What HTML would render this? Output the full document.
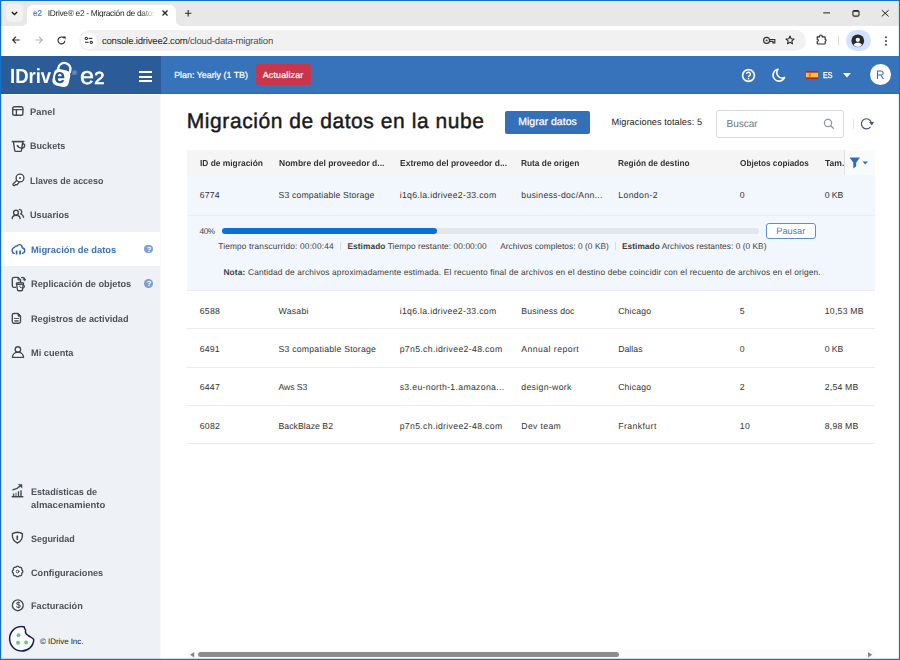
<!DOCTYPE html>
<html lang="es">
<head>
<meta charset="utf-8">
<title>IDrive® e2 - Migración de datos en la nube</title>
<style>
*{box-sizing:border-box;margin:0;padding:0}
html,body{width:900px;height:660px;overflow:hidden;background:#fff}
body{font-family:"Liberation Sans",sans-serif;color:#222;position:relative;text-rendering:geometricPrecision}
.a{position:absolute}
.t{position:absolute;white-space:nowrap;line-height:1}
svg{position:absolute;overflow:visible}
.hr{position:absolute;left:187px;width:688px;height:1px;background:#ececee}
</style>
</head>
<body>
<!-- ===== Browser chrome ===== -->
<div class="a" style="left:0;top:0;width:900px;height:26px;background:#e8e8e8"></div>
<div class="a" style="left:5.5px;top:4px;width:17.5px;height:18px;border-radius:5px;background:#f2f2f2"></div>
<svg style="left:10.5px;top:10.5px" width="7" height="5" viewBox="0 0 7 5"><path d="M.8 .9 L3.5 3.6 L6.2 .9" fill="none" stroke="#1f1f1f" stroke-width="1.4"/></svg>
<div class="a" style="left:27px;top:4.5px;width:149px;height:22px;background:#fff;border-radius:6px 6px 0 0"></div>
<svg style="left:22px;top:21px" width="5" height="5" viewBox="0 0 5 5"><path d="M5 0 V5 H0 A5 5 0 0 0 5 0 Z" fill="#fff"/></svg>
<svg style="left:176px;top:21px" width="5" height="5" viewBox="0 0 5 5"><path d="M0 0 V5 H5 A5 5 0 0 1 0 0 Z" fill="#fff"/></svg>
<div class="t" style="left:32.80px;top:9.00px;font-size:8.6px;color:#3d7ccb;-webkit-text-stroke:0.2px #3d7ccb;transform:scaleX(0.9407);transform-origin:0 50%">e2</div>
<div class="t" style="left:47.70px;top:9.00px;font-size:8.4px;color:#1f1f1f;letter-spacing:-0.313px;width:108px;overflow:hidden;-webkit-mask-image:linear-gradient(90deg,#000 86%,transparent 99%);mask-image:linear-gradient(90deg,#000 86%,transparent 99%)">IDrive® e2 - Migración de datos en la nube</div>
<svg style="left:162.2px;top:9.9px" width="6" height="6" viewBox="0 0 6 6"><path d="M.5 .5 L5.5 5.5 M5.5 .5 L.5 5.5" stroke="#1f1f1f" stroke-width="1.15"/></svg>
<svg style="left:184.9px;top:9.7px" width="6.4" height="6.4" viewBox="0 0 6.4 6.4"><path d="M3.2 0 V6.4 M0 3.2 H6.4" stroke="#2a2a2a" stroke-width="1.1"/></svg>
<svg style="left:821.6px;top:7.7px" width="70" height="10" viewBox="0 0 70 10"><path d="M1.2 4.9 H8" stroke="#1f1f1f" stroke-width="1"/><rect x="30.9" y="2.5" width="6.1" height="5.6" rx="1.4" fill="none" stroke="#222" stroke-width="1.1"/><path d="M31.2 3.4 H36.8" stroke="#222" stroke-width=".9"/><path d="M59.8 2.2 L66.6 8.4 M66.6 2.2 L59.8 8.4" stroke="#1f1f1f" stroke-width="1"/></svg>
<div class="a" style="left:0;top:26px;width:900px;height:30px;background:#fff"></div>
<svg style="left:11.6px;top:36.4px" width="8" height="8" viewBox="0 0 8 8"><path d="M7.6 4 H1 M4 .7 L.7 4 L4 7.3" fill="none" stroke="#2b2b2b" stroke-width="1.1"/></svg>
<svg style="left:34.5px;top:36.4px" width="8" height="8" viewBox="0 0 8 8"><path d="M.4 4 H7 M4 .7 L7.3 4 L4 7.3" fill="none" stroke="#b4b4b4" stroke-width="1.1"/></svg>
<svg style="left:57px;top:36px" width="9" height="9" viewBox="0 0 9 9"><path d="M7.9 4.7 A3.45 3.45 0 1 1 6.9 2" fill="none" stroke="#2b2b2b" stroke-width="1.15"/><path d="M5.6 .5 H8.6 V3.5 Z" fill="#2b2b2b"/></svg>
<div class="a" style="left:78.5px;top:30px;width:727px;height:21.4px;border-radius:10.7px;background:#f1f1f1"></div>
<div class="a" style="left:81.2px;top:32.8px;width:15.8px;height:15.8px;border-radius:50%;background:#fff"></div>
<svg style="left:84px;top:36px" width="10" height="9" viewBox="0 0 10 9" fill="none" stroke="#2b2b2b" stroke-width="1.05"><circle cx="2.3" cy="2.4" r="1.15"/><path d="M4.6 2.4 H8.4"/><path d="M1 6.3 H4.6"/><circle cx="7.3" cy="6.3" r="1.15"/></svg>
<div class="t" style="left:101.90px;top:37.00px;font-size:9.5px;color:#1f1f1f;letter-spacing:-0.180px">console.idrivee2.com<span style="color:#4a4d51">/cloud-data-migration</span></div>
<svg style="left:763.4px;top:36px" width="13" height="9" viewBox="0 0 13 9"><circle cx="3.6" cy="4.4" r="3" fill="none" stroke="#303030" stroke-width="1.15"/><circle cx="3.6" cy="4.4" r=".95" fill="#303030"/><path d="M6.6 3.5 H11.8 V6.9 H9.9 V5.3 H6.6" fill="none" stroke="#303030" stroke-width="1.15"/></svg>
<svg style="left:785.2px;top:35.2px" width="10" height="10" viewBox="0 0 12 12"><path d="M6 1.3 L7.4 4.5 L10.9 4.8 L8.2 7.1 L9 10.5 L6 8.7 L3 10.5 L3.8 7.1 L1.1 4.8 L4.6 4.5 Z" fill="none" stroke="#2b2b2b" stroke-width="1.3" stroke-linejoin="round"/></svg>
<svg style="left:816.4px;top:34.2px" width="11.5" height="11" viewBox="0 0 11.5 11"><path d="M1.2 2.8 H3.6 V2.3 A1.3 1.3 0 0 1 6.2 2.3 V2.8 H8.4 Q9.2 2.8 9.2 3.6 V5.4 A.9 .9 0 0 1 9.2 7.2 V9.2 Q9.2 10 8.4 10 H2 Q1.2 10 1.2 9.2 V7.4 A1.1 1.1 0 0 0 1.2 5.2 Z" fill="none" stroke="#2b2b2b" stroke-width="1.15" stroke-linejoin="round"/></svg>
<div class="a" style="left:838px;top:36px;width:1px;height:9px;background:#dcdcdc"></div>
<div class="a" style="left:845.5px;top:29.6px;width:25.5px;height:21.2px;border-radius:10.6px;background:#d3e3fd"></div>
<svg style="left:851.3px;top:33.6px" width="13.6" height="13.6" viewBox="0 0 14 14"><circle cx="7" cy="7" r="6.6" fill="#2a2a2a"/><circle cx="7" cy="6" r="2.2" fill="#f4f7fd"/><path d="M2.6 11.4 C3.4 9.6 5.2 9 7 9 C8.8 9 10.6 9.6 11.4 11.4 A6 6 0 0 1 2.6 11.4 Z" fill="#f4f7fd"/></svg>
<svg style="left:883.5px;top:34.5px" width="4" height="12" viewBox="0 0 4 12"><circle cx="2" cy="2.3" r=".95" fill="#333"/><circle cx="2" cy="6" r=".95" fill="#333"/><circle cx="2" cy="9.7" r=".95" fill="#333"/></svg>
<!-- ===== App header ===== -->
<div class="a" style="left:0;top:56px;width:161px;height:38px;background:#2c5c97"></div>
<div class="a" style="left:161px;top:56px;width:739px;height:38px;background:#3773ba"></div>
<div class="a" style="left:0;top:93px;width:161px;height:1px;background:#27548c"></div><div class="a" style="left:161px;top:93px;width:739px;height:1px;background:#2f68ae"></div>
<svg style="left:0;top:0" width="120" height="94" viewBox="0 0 120 94"><g transform="rotate(12 61.5 78)"><path d="M56.3 71.5 V68.6 A6.1 6.1 0 0 1 68.5 68.6 V71.5" fill="none" stroke="#fff" stroke-width="2.3"/><rect x="53" y="69.6" width="16.6" height="16.8" rx="4.8" fill="#fff"/></g></svg>
<div class="t" style="left:10.1px;top:67px;font-size:20.5px;color:#fff;font-weight:bold;transform:scaleX(.9032);transform-origin:0 50%">IDriv<span style="color:#245393;margin-left:3.4px;display:inline-block;transform:scaleX(1.05);transform-origin:0 50%">e</span></div>
<div class="t" style="left:72.00px;top:71.00px;font-size:6.5px;color:#b9cbe4">®</div>
<div class="t" style="left:79.85px;top:65px;font-size:24px;color:#fff;-webkit-text-stroke:.5px #fff;transform:scaleX(1.05);transform-origin:0 50%">e<span style="font-size:17.5px;-webkit-text-stroke:.7px #fff;margin-left:.1px">2</span></div>
<div class="a" style="left:139px;top:71px;width:13px;height:2px;background:#fff"></div>
<div class="a" style="left:139px;top:75.5px;width:13px;height:2px;background:#fff"></div>
<div class="a" style="left:139px;top:80px;width:13px;height:2px;background:#fff"></div>
<div class="t" style="left:174.20px;top:71.00px;font-size:8.8px;color:#fff;-webkit-text-stroke:0.22px #fff;letter-spacing:0.030px">Plan: Yearly (1 TB)</div>
<div class="a" style="left:256px;top:64px;width:55px;height:21px;border-radius:3px;background:#c9364b"></div>
<div class="t" style="left:262.80px;top:71.00px;font-size:8.8px;color:#fff;-webkit-text-stroke:0.22px #fff;letter-spacing:0.201px">Actualizar</div>
<svg style="left:741px;top:68px" width="15" height="15" viewBox="0 0 15 15"><circle cx="7.5" cy="7.5" r="5.9" fill="none" stroke="#fff" stroke-width="1.65"/><path d="M5.6 6.1 A1.9 1.9 0 1 1 8.3 7.8 C7.7 8.1 7.5 8.4 7.5 9.1" fill="none" stroke="#fff" stroke-width="1.45"/><circle cx="7.5" cy="10.7" r=".85" fill="#fff"/></svg>
<svg style="left:772px;top:68px" width="14" height="14" viewBox="0 0 14 14"><path d="M6 1.2 A6 6 0 1 0 12.6 9.4 A5.4 5.4 0 0 1 6 1.2 Z" fill="none" stroke="#fff" stroke-width="1.55" stroke-linejoin="round"/></svg>
<svg style="left:806px;top:71px" width="12" height="8" viewBox="0 0 12 8"><rect width="12" height="8" fill="#c01f2e"/><rect y="1.7" width="12" height="4.6" fill="#f4c531"/><rect x="2.8" y="2.6" width="1.9" height="2.8" fill="#b5402c"/><rect x="3.4" y="3.2" width=".8" height="1.4" fill="#f0e6d8"/></svg>
<div class="t" style="left:822.60px;top:71.00px;font-size:8.4px;color:#fff;-webkit-text-stroke:0.3px #fff;transform:scaleX(0.8458);transform-origin:0 50%">ES</div>
<svg style="left:843px;top:73px" width="8" height="5" viewBox="0 0 8 5"><path d="M0 0 H8 L4 4.6 Z" fill="#fff"/></svg>
<div class="a" style="left:869.8px;top:63.8px;width:21px;height:21px;border-radius:50%;background:#fff"></div>
<div class="t" style="left:875.75px;top:69.00px;font-size:12.4px;color:#3b6fb3;transform:scaleX(0.9500);transform-origin:0 50%">R</div>
<!-- ===== Sidebar ===== -->
<div class="a" style="left:0;top:95px;width:160px;height:565px;background:#eef2f6"></div>
<div class="a" style="left:160px;top:94px;width:1px;height:566px;background:#f6f8fa"></div>
<div class="a" style="left:0;top:232px;width:160px;height:34px;background:#fff"></div>
<div class="t" style="left:30.40px;top:107.00px;font-size:9.4px;color:#4d525a;font-weight:bold;transform:scaleX(0.9997);transform-origin:0 50%">Panel</div>
<div class="t" style="left:30.40px;top:141.00px;font-size:9.4px;color:#4d525a;font-weight:bold;transform:scaleX(0.9652);transform-origin:0 50%">Buckets</div>
<div class="t" style="left:30.40px;top:176.00px;font-size:9.4px;color:#4d525a;font-weight:bold;transform:scaleX(0.9521);transform-origin:0 50%">Llaves de acceso</div>
<div class="t" style="left:30.40px;top:210.00px;font-size:9.4px;color:#4d525a;font-weight:bold;transform:scaleX(0.9773);transform-origin:0 50%">Usuarios</div>
<div class="t" style="left:30.60px;top:245.00px;font-size:9.4px;color:#3a72b8;font-weight:bold;transform:scaleX(0.9975);transform-origin:0 50%">Migración de datos</div>
<div class="t" style="left:30.60px;top:279.00px;font-size:9.4px;color:#4d525a;font-weight:bold;transform:scaleX(0.9814);transform-origin:0 50%">Replicación de objetos</div>
<div class="t" style="left:30.60px;top:314.00px;font-size:9.4px;color:#4d525a;font-weight:bold;transform:scaleX(0.9750);transform-origin:0 50%">Registros de actividad</div>
<div class="t" style="left:30.60px;top:348.00px;font-size:9.4px;color:#4d525a;font-weight:bold;transform:scaleX(0.9813);transform-origin:0 50%">Mi cuenta</div>
<div class="t" style="left:30.60px;top:487.00px;font-size:9.4px;color:#4d525a;font-weight:bold;transform:scaleX(0.9670);transform-origin:0 50%">Estadísticas de</div>
<div class="t" style="left:30.60px;top:500.00px;font-size:9.4px;color:#4d525a;font-weight:bold;transform:scaleX(1.0117);transform-origin:0 50%">almacenamiento</div>
<div class="t" style="left:30.60px;top:534.00px;font-size:9.4px;color:#4d525a;font-weight:bold;transform:scaleX(0.9542);transform-origin:0 50%">Seguridad</div>
<div class="t" style="left:30.60px;top:568.00px;font-size:9.4px;color:#4d525a;font-weight:bold;transform:scaleX(0.9763);transform-origin:0 50%">Configuraciones</div>
<div class="t" style="left:30.60px;top:601.00px;font-size:9.4px;color:#4d525a;font-weight:bold;transform:scaleX(0.9736);transform-origin:0 50%">Facturación</div>
<div class="t" style="left:40.00px;top:638.00px;font-size:8px;color:#222;letter-spacing:-0.059px">© IDrive Inc.</div>
<svg style="left:0;top:0;filter:drop-shadow(0 0 .7px #fff) drop-shadow(0 0 .5px #fff)" width="160" height="660" viewBox="0 0 160 660" fill="none" stroke="#3d4852" stroke-width="1.4" stroke-linecap="round" stroke-linejoin="round"><rect x="12.7" y="106.7" width="10.2" height="8.5" rx="1.8" fill="#fff"/><path d="M12.7 109.6 H22.9 M16.4 109.6 V115.2"/><path d="M13.4 141.6 L14.7 150.4 Q14.8 151.4 15.8 151.4 H20.4 Q21.4 151.4 21.5 150.4 L22.8 141.6 Z" fill="#fff"/><path d="M12.3 141.5 H23.8" stroke-width="1.6"/><path d="M22.6 143.4 C25.6 144.2 25.4 147.6 22 148.2 C20 148.4 18.4 147.2 17.6 145.8"/><circle cx="17.5" cy="145.7" r=".9" fill="#3d4852" stroke="none"/><path d="M16.9 180.3 L13.1 184.1 Q12.6 185 13.4 185.5 L14.6 185.6 L15.6 184.6 L17 184.7 L18.9 182.6" fill="#fff"/><circle cx="20" cy="178" r="3.9" fill="#fff"/><circle cx="20" cy="178" r="1" fill="#3d4852" stroke="none"/><circle cx="16" cy="212.7" r="2.4" fill="#fff"/><path d="M12.2 218.6 C12.4 214.2 19.8 214.2 20.1 218.6"/><path d="M19.3 209.4 C22 209.6 22.6 212.8 20.6 213.8 C22.2 214.3 23.3 215.6 23.6 217.2"/><g stroke="#2d66b6" stroke-width="1.4"><path d="M14.3 253.4 C11.4 252.8 11.4 248.2 14.6 247.4 C15 246.2 16.2 245.8 17 246.2 C18.2 243.8 22.2 244 22.2 247.8 C25.4 248.4 25.6 252.6 22.4 253.4"/><path d="M16.6 250.4 V254.6 M20.1 250.4 V254.6" stroke-width="1.7" stroke-linecap="butt"/></g><path d="M15.6 287.4 H14 Q12.3 287.4 12.3 285.8 V279 Q12.3 277.4 14 277.4 H18.2 L20.6 279.9 V281.4"/><path d="M18 277.6 V280 H20.4" stroke-width="1"/><path d="M21.6 277.6 C23.2 277.4 24.4 278 24.8 279.4" /><path d="M23.4 279.4 H25.6 L24.8 280.8 Z" fill="#3d4852" stroke-width=".8"/><path d="M16.6 283.6 L17.5 290 Q17.6 290.8 18.4 290.8 H21.6 Q22.4 290.8 22.5 290 L23.4 283.6 Z" fill="#fff"/><ellipse cx="20" cy="283.5" rx="3.6" ry="1" fill="#fff"/><path d="M23.2 285 C25.4 286 24.6 288.2 22.4 288 C21 288 20.2 287.4 19.8 286.4" stroke-width="1.1"/><path d="M13.8 313.5 H18 L20.5 316.2 V321.6 Q20.5 323.2 18.9 323.2 H13.8 Q12.3 323.2 12.3 321.6 V315.1 Q12.3 313.5 13.8 313.5 Z" fill="#fff"/><path d="M18 313.7 V316.2 H20.4 Z" fill="#3d4852" stroke-width=".8"/><path d="M14.4 318.4 H18.6" stroke-width="1"/><rect x="14.3" y="320" width="4.4" height="1.8" fill="#6b757e" stroke="none"/><circle cx="17.9" cy="349.5" r="2.7" fill="#fff"/><path d="M12.4 357.4 C12.8 350.6 23.2 350.6 23.6 357.4 Z" fill="#fff"/><path d="M12.2 496.8 H22.8" stroke-width="1.5"/><path d="M13.6 496 V493.6 M18.5 496 V491.2 M21 496 V490.2" stroke-width="1.4" stroke-linecap="butt"/><path d="M16 496 V492.6" stroke="#7a838b" stroke-width="1.4" stroke-linecap="butt"/><path d="M13 489.8 C16 489.4 18.4 488 20.4 485.8"/><path d="M18.6 484.4 H22 V487.8 Z" fill="#3d4852" stroke-width=".6"/><path d="M17.4 532.2 C19.4 532.3 21.2 532.8 22.4 533.6 C22.8 538.4 21 541.4 17.4 543 C13.8 541.4 12 538.4 12.4 533.6 C13.6 532.8 15.4 532.3 17.4 532.2 Z" fill="#fff"/><path d="M17.3 536.2 V539.2" stroke-width="1.7"/><path d="M15.92 567.43 A1.75 1.75 0 0 1 19.28 567.43 A1.75 1.75 0 0 1 21.67 569.82 A1.75 1.75 0 0 1 21.67 573.18 A1.75 1.75 0 0 1 19.28 575.57 A1.75 1.75 0 0 1 15.92 575.57 A1.75 1.75 0 0 1 13.53 573.18 A1.75 1.75 0 0 1 13.53 569.82 A1.75 1.75 0 0 1 15.92 567.43 Z" fill="#fff" stroke-width="1.3"/><circle cx="17.6" cy="571.5" r="1.4" stroke-width="1"/><circle cx="17.8" cy="605.3" r="5.4" fill="#fff"/><path d="M21.6 626.6 C22.6 626.6 23.6 626.8 24.4 627 C24.2 628.6 24.8 629.4 25.6 629.8 C25 632.4 26.2 634.4 28.2 635.4 C30 637.2 32.4 637.4 33.8 639.6 C33.4 646.4 28 651 21.6 651 C15 651 9.6 645.6 9.6 638.8 C9.6 632 15 626.6 21.6 626.6 Z" fill="#fff" stroke="#1d1b5e" stroke-width="1.5"/><g fill="#62c98b" stroke="none"><circle cx="18.5" cy="635.2" r="1.9"/><circle cx="18" cy="642.7" r="2"/><circle cx="26.1" cy="642.5" r="1.9"/></g></svg>
<div class="t" style="left:15.50px;top:601.00px;font-size:9.2px;color:#3d4852;font-weight:bold;transform:scaleX(0.9200);transform-origin:0 50%">$</div>
<div class="a" style="left:144.2px;top:244.9px;width:8.6px;height:8.6px;border-radius:50%;background:#7f9fcf"></div>
<div class="t" style="left:146.70px;top:246.00px;font-size:7.5px;color:#fff;font-weight:bold">?</div>
<div class="a" style="left:144.2px;top:279.4px;width:8.6px;height:8.6px;border-radius:50%;background:#7f9fcf"></div>
<div class="t" style="left:146.70px;top:280.00px;font-size:7.5px;color:#fff;font-weight:bold">?</div>
<!-- ===== Main ===== -->
<div class="t" style="left:186.80px;top:111.00px;font-size:21px;color:#1a1a1a;-webkit-text-stroke:0.45px #1a1a1a;letter-spacing:0.565px">Migración de datos en la nube</div>
<div class="a" style="left:504.5px;top:110.5px;width:85.5px;height:23.5px;border-radius:2px;background:#3470b8"></div>
<div class="t" style="left:518.20px;top:117.00px;font-size:10.5px;color:#fff;-webkit-text-stroke:0.25px #fff;letter-spacing:0.018px">Migrar datos</div>
<div class="t" style="left:611.50px;top:118.00px;font-size:9.2px;color:#222;letter-spacing:0.054px">Migraciones totales: 5</div>
<div class="a" style="left:716px;top:110px;width:127.5px;height:27.5px;border:1px solid #d9d9d9;border-radius:3px;background:#fff"></div>
<div class="t" style="left:726.60px;top:120.00px;font-size:10.2px;color:#777;letter-spacing:-0.143px">Buscar</div>
<svg style="left:822.5px;top:118.3px" width="12" height="12" viewBox="0 0 12 12"><circle cx="5" cy="5" r="3.6" fill="none" stroke="#8e96aa" stroke-width="1.25"/><path d="M7.7 7.7 L10.8 10.8" stroke="#8e96aa" stroke-width="1.3"/></svg>
<div class="a" style="left:853px;top:119px;width:1px;height:10px;background:#e4e4e4"></div>
<svg style="left:0;top:0" width="900" height="140" viewBox="0 0 900 140"><path d="M870.3 127.2 A5.1 5.1 0 1 1 871.4 122.6" fill="none" stroke="#48546a" stroke-width="1.15" stroke-linecap="round"/><path d="M869.1 122.2 L874 121.8 L871.9 125.4 Z" fill="#48546a"/></svg>
<div class="a" style="left:187px;top:150px;width:688px;height:25px;background:#f5f5f5"></div>
<div class="a" style="left:187px;top:175px;width:688px;height:115px;background:#f2f7fd"></div>
<div class="a" style="left:187px;top:215px;width:688px;height:1px;background:#e9eef3"></div>
<div class="t" style="left:199.70px;top:159.00px;font-size:8.7px;color:#333;font-weight:bold;transform:scaleX(0.9651);transform-origin:0 50%">ID de migración</div>
<div class="t" style="left:278.70px;top:159.00px;font-size:8.7px;color:#333;font-weight:bold;transform:scaleX(0.9792);transform-origin:0 50%">Nombre del proveedor d...</div>
<div class="t" style="left:399.70px;top:159.00px;font-size:8.7px;color:#333;font-weight:bold;transform:scaleX(0.9764);transform-origin:0 50%">Extremo del proveedor d...</div>
<div class="t" style="left:521.40px;top:159.00px;font-size:8.7px;color:#333;font-weight:bold;transform:scaleX(0.9585);transform-origin:0 50%">Ruta de origen</div>
<div class="t" style="left:618.40px;top:159.00px;font-size:8.7px;color:#333;font-weight:bold;transform:scaleX(0.9508);transform-origin:0 50%">Región de destino</div>
<div class="t" style="left:739.80px;top:159.00px;font-size:8.7px;color:#333;font-weight:bold;transform:scaleX(0.9445);transform-origin:0 50%">Objetos copiados</div>
<div class="t" style="left:825.00px;top:159.00px;font-size:8.7px;color:#333;font-weight:bold;transform:scaleX(0.9835);transform-origin:0 50%">Tam.</div>
<div class="a" style="left:844px;top:150px;width:31px;height:25px;background:#f9fafb;border-left:1px solid #dfe3e8"></div>
<svg style="left:849px;top:157px" width="20" height="12" viewBox="0 0 20 12"><path d="M.5 .5 H11 L7.2 5.4 V9.2 L4.3 11.5 V5.4 Z" fill="#2f6db5"/><path d="M13.5 4.5 H19 L16.25 7.5 Z" fill="#2f6db5"/></svg>
<div class="t" style="left:199.70px;top:191.00px;font-size:8.7px;color:#333;letter-spacing:0.168px">6774</div>
<div class="t" style="left:278.50px;top:191.00px;font-size:8.7px;color:#333;letter-spacing:0.148px">S3 compatiable Storage</div>
<div class="t" style="left:399.70px;top:191.00px;font-size:8.7px;color:#333;letter-spacing:0.305px">i1q6.la.idrivee2-33.com</div>
<div class="t" style="left:521.30px;top:191.00px;font-size:8.7px;color:#333;letter-spacing:0.267px">business-doc/Ann...</div>
<div class="t" style="left:618.20px;top:191.00px;font-size:8.7px;color:#333;letter-spacing:0.388px">London-2</div>
<div class="t" style="left:739.70px;top:191.00px;font-size:8.7px;color:#333">0</div>
<div class="t" style="left:824.80px;top:191.00px;font-size:8.7px;color:#333;letter-spacing:-0.147px">0 KB</div>
<div class="t" style="left:199.70px;top:307.00px;font-size:8.7px;color:#333;letter-spacing:0.302px">6588</div>
<div class="t" style="left:278.50px;top:307.00px;font-size:8.7px;color:#333;letter-spacing:0.257px">Wasabi</div>
<div class="t" style="left:399.70px;top:307.00px;font-size:8.7px;color:#333;letter-spacing:0.305px">i1q6.la.idrivee2-33.com</div>
<div class="t" style="left:521.30px;top:307.00px;font-size:8.7px;color:#333;letter-spacing:0.134px">Business doc</div>
<div class="t" style="left:618.20px;top:307.00px;font-size:8.7px;color:#333;letter-spacing:0.160px">Chicago</div>
<div class="t" style="left:739.70px;top:307.00px;font-size:8.7px;color:#333">5</div>
<div class="t" style="left:824.80px;top:307.00px;font-size:8.7px;color:#333;letter-spacing:0.230px">10,53 MB</div>
<div class="t" style="left:199.70px;top:345.00px;font-size:8.7px;color:#333;letter-spacing:0.168px">6491</div>
<div class="t" style="left:278.50px;top:345.00px;font-size:8.7px;color:#333;letter-spacing:0.224px">S3 compatiable Storage</div>
<div class="t" style="left:399.70px;top:345.00px;font-size:8.7px;color:#333;letter-spacing:0.332px">p7n5.ch.idrivee2-48.com</div>
<div class="t" style="left:521.30px;top:345.00px;font-size:8.7px;color:#333;letter-spacing:0.438px">Annual report</div>
<div class="t" style="left:618.20px;top:345.00px;font-size:8.7px;color:#333;letter-spacing:0.041px">Dallas</div>
<div class="t" style="left:739.70px;top:345.00px;font-size:8.7px;color:#333">0</div>
<div class="t" style="left:824.80px;top:345.00px;font-size:8.7px;color:#333;letter-spacing:-0.147px">0 KB</div>
<div class="t" style="left:199.70px;top:383.00px;font-size:8.7px;color:#333;letter-spacing:0.235px">6447</div>
<div class="t" style="left:278.50px;top:383.00px;font-size:8.7px;color:#333;letter-spacing:-0.093px">Aws S3</div>
<div class="t" style="left:399.70px;top:383.00px;font-size:8.7px;color:#333;letter-spacing:0.320px">s3.eu-north-1.amazona...</div>
<div class="t" style="left:521.30px;top:383.00px;font-size:8.7px;color:#333;letter-spacing:0.331px">design-work</div>
<div class="t" style="left:618.20px;top:383.00px;font-size:8.7px;color:#333;letter-spacing:0.160px">Chicago</div>
<div class="t" style="left:739.70px;top:383.00px;font-size:8.7px;color:#333">2</div>
<div class="t" style="left:824.80px;top:383.00px;font-size:8.7px;color:#333;letter-spacing:0.174px">2,54 MB</div>
<div class="t" style="left:199.70px;top:422.00px;font-size:8.7px;color:#333;letter-spacing:0.302px">6082</div>
<div class="t" style="left:278.50px;top:422.00px;font-size:8.7px;color:#333;letter-spacing:0.041px">BackBlaze B2</div>
<div class="t" style="left:399.70px;top:422.00px;font-size:8.7px;color:#333;letter-spacing:0.332px">p7n5.ch.idrivee2-48.com</div>
<div class="t" style="left:521.30px;top:422.00px;font-size:8.7px;color:#333;letter-spacing:0.337px">Dev team</div>
<div class="t" style="left:618.20px;top:422.00px;font-size:8.7px;color:#333;letter-spacing:0.419px">Frankfurt</div>
<div class="t" style="left:739.70px;top:422.00px;font-size:8.7px;color:#333;letter-spacing:0.568px">10</div>
<div class="t" style="left:824.80px;top:422.00px;font-size:8.7px;color:#333;letter-spacing:0.174px">8,98 MB</div>
<div class="t" style="left:199.60px;top:227.00px;font-size:8.3px;color:#444;letter-spacing:-0.514px">40%</div>
<div class="a" style="left:221.7px;top:228.3px;width:537.6px;height:6px;border-radius:3px;background:#e3e6ea"></div>
<div class="a" style="left:221.7px;top:228.3px;width:215.6px;height:6px;border-radius:3px;background:#0b6fd8"></div>
<div class="a" style="left:766px;top:222.5px;width:50px;height:16px;border:1px solid #5b8fce;border-radius:3px;background:#fff"></div>
<div class="t" style="left:776.30px;top:227.00px;font-size:9.2px;color:#3f7cc4;letter-spacing:-0.030px">Pausar</div>
<div class="t" style="left:218.20px;top:242.00px;font-size:8.3px;color:#3c3c3c;letter-spacing:0.180px">Tiempo transcurrido: 00:00:44</div>
<div class="a" style="left:340px;top:242px;width:1px;height:8px;background:#d9dde2"></div>
<div class="t" style="left:347.40px;top:242.00px;font-size:8.3px;color:#3c3c3c;letter-spacing:0.093px"><b>Estimado</b> Tiempo restante: 00:00:00</div>
<div class="t" style="left:500.20px;top:242.00px;font-size:8.3px;color:#3c3c3c;letter-spacing:0.062px">Archivos completos: 0 (0 KB)</div>
<div class="a" style="left:614.5px;top:242px;width:1px;height:8px;background:#d9dde2"></div>
<div class="t" style="left:622.00px;top:242.00px;font-size:8.3px;color:#3c3c3c;letter-spacing:0.055px"><b>Estimado</b> Archivos restantes: 0 (0 KB)</div>
<div class="t" style="left:223.40px;top:268.00px;font-size:8.3px;color:#3c3c3c;letter-spacing:0.182px"><b>Nota:</b> Cantidad de archivos aproximadamente estimada. El recuento final de archivos en el destino debe coincidir con el recuento de archivos en el origen.</div>
<div class="hr" style="top:290px"></div>
<div class="hr" style="top:328px"></div>
<div class="hr" style="top:367px"></div>
<div class="hr" style="top:405px"></div>
<div class="hr" style="top:443px"></div>
<div class="a" style="left:187px;top:650px;width:688px;height:9px;background:#fbfbfb"></div>
<svg style="left:189.8px;top:651.8px" width="4.2" height="5.4" viewBox="0 0 4.2 5.4"><path d="M4.2 0 V5.4 L0 2.7 Z" fill="#858585"/></svg>
<svg style="left:867.6px;top:651.8px" width="4.2" height="5.4" viewBox="0 0 4.2 5.4"><path d="M0 0 V5.4 L4.2 2.7 Z" fill="#858585"/></svg>
<div class="a" style="left:198px;top:652px;width:421px;height:5px;border-radius:2.5px;background:#8c8c8c"></div>
<div class="a" style="left:0;top:0;width:900px;height:1px;background:#1470c4"></div>
<div class="a" style="left:0;top:0;width:1px;height:660px;background:#1470c4"></div><div class="a" style="left:1px;top:0;width:1px;height:660px;background:rgba(20,112,196,.22)"></div>
<div class="a" style="left:899px;top:0;width:1px;height:660px;background:#1470c4"></div><div class="a" style="left:898px;top:0;width:1px;height:660px;background:rgba(20,112,196,.12)"></div>
<div class="a" style="left:0;top:659px;width:900px;height:1px;background:#1470c4"></div><div class="a" style="left:0;top:658px;width:900px;height:1px;background:rgba(20,112,196,.22)"></div>
</body>
</html>
